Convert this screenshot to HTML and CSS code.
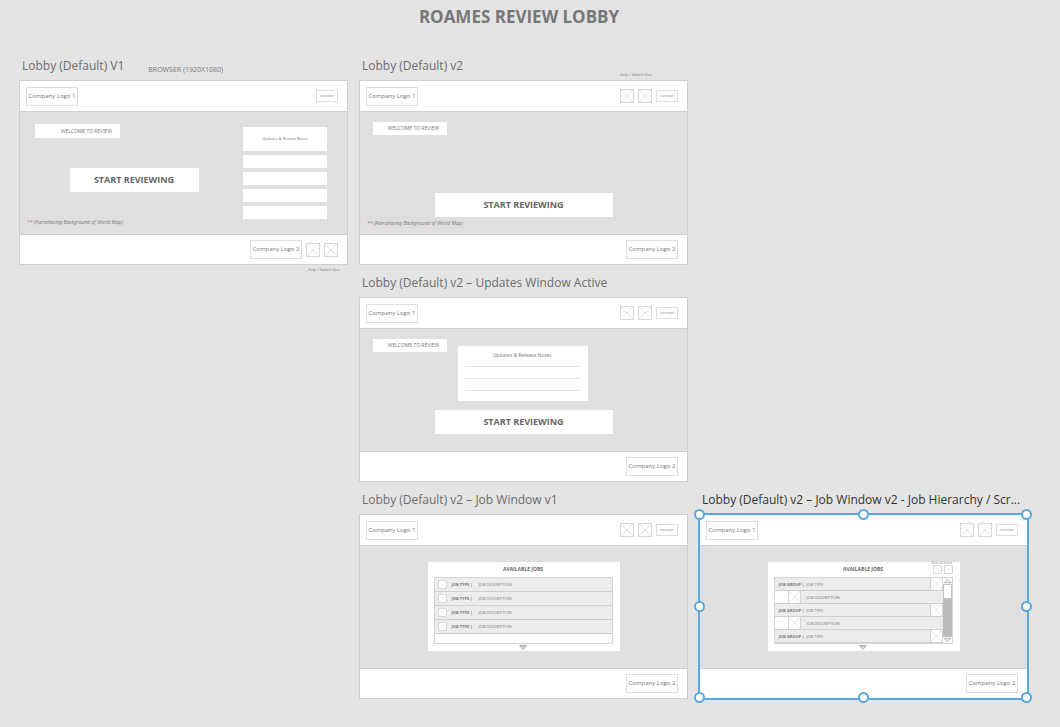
FILE: index.html
```
<!DOCTYPE html>
<html lang="en">
<head>
<meta charset="utf-8">
<meta name="viewport" content="width=device-width, initial-scale=1">
<title>Roames Review Lobby</title>
<link rel="stylesheet" href="styles.css">
</head>
<body>
<svg class="defs" aria-hidden="true">
  <symbol id="cross" viewBox="0 0 14 14" preserveAspectRatio="none"><path d="M0 0L14 14M14 0L0 14" fill="none" stroke="#d4d4d4" stroke-width="0.7"/></symbol>
  <symbol id="more" viewBox="0 0 8 5"><path d="M0.5 0.5H7.5L4 4.5Z" fill="#e4e4e4" stroke="#999" stroke-width="0.8"/><path d="M1.5 1.7H6.5" stroke="#aaa" stroke-width="0.6"/></symbol>
</svg>
<h1 class="title">ROAMES REVIEW LOBBY</h1>
<main class="canvas">

  <section class="artboard col-1">
    <div class="caption"><h2 class="name">Lobby (Default) V1</h2><span class="size">BROWSER (1920X1080)</span></div>
    <div class="board">
      <header class="bar"><span class="logo">Company Logo 1</span><span class="version">version</span></header>
      <div class="stage split">
        <div class="main">
          <p class="welcome wide">WELCOME TO REVIEW</p>
          <button class="start small" type="button">START REVIEWING</button>
          <p class="note">** (Parrallaxing Background of World Map)</p>
        </div>
        <div class="news"><p class="news-title">Updates &amp; Review Notes</p><i class="slot"></i><i class="slot"></i><i class="slot"></i><i class="slot"></i></div>
      </div>
      <footer class="bar foot"><span class="logo">Company Logo 2</span><svg class="box"><use href="#cross"/></svg><svg class="box"><use href="#cross"/></svg></footer>
    </div>
    <span class="hint below">Help / Switch User</span>
  </section>

  <section class="artboard col-2">
    <div class="caption"><h2 class="name">Lobby (Default) v2</h2><span class="hint">Help / Switch User</span></div>
    <div class="board">
      <header class="bar"><span class="logo">Company Logo 1</span><svg class="box"><use href="#cross"/></svg><svg class="box"><use href="#cross"/></svg><span class="version">version</span></header>
      <div class="stage">
        <p class="welcome">WELCOME TO REVIEW</p>
        <button class="start low" type="button">START REVIEWING</button>
        <p class="note">** (Parrallaxing Background of World Map)</p>
      </div>
      <footer class="bar foot"><span class="logo">Company Logo 2</span></footer>
    </div>
  </section>

  <section class="artboard col-2">
    <div class="caption"><h2 class="name">Lobby (Default) v2 – Updates Window Active</h2></div>
    <div class="board">
      <header class="bar"><span class="logo">Company Logo 1</span><svg class="box"><use href="#cross"/></svg><svg class="box"><use href="#cross"/></svg><span class="version">version</span></header>
      <div class="stage">
        <div class="top-row">
          <p class="welcome">WELCOME TO REVIEW</p>
          <div class="updates"><p class="updates-title">Updates &amp; Release Notes</p><hr class="line"><hr class="line"><hr class="line"></div>
        </div>
        <button class="start" type="button">START REVIEWING</button>
      </div>
      <footer class="bar foot"><span class="logo">Company Logo 2</span></footer>
    </div>
  </section>

  <section class="artboard col-2">
    <div class="caption"><h2 class="name">Lobby (Default) v2 – Job Window v1</h2></div>
    <div class="board">
      <header class="bar"><span class="logo">Company Logo 1</span><svg class="box"><use href="#cross"/></svg><svg class="box"><use href="#cross"/></svg><span class="version">version</span></header>
      <div class="stage">
        <div class="jobs">
          <div class="jobs-head"><h3 class="jobs-title">AVAILABLE JOBS</h3></div>
          <ul class="list">
            <li class="job"><svg class="tick"><use href="#cross"/></svg><b class="type">JOB TYPE |</b><span>JOB DESCRIPTION</span></li>
            <li class="job"><svg class="tick"><use href="#cross"/></svg><b class="type">JOB TYPE |</b><span>JOB DESCRIPTION</span></li>
            <li class="job"><svg class="tick"><use href="#cross"/></svg><b class="type">JOB TYPE |</b><span>JOB DESCRIPTION</span></li>
            <li class="job"><svg class="tick"><use href="#cross"/></svg><b class="type">JOB TYPE |</b><span>JOB DESCRIPTION</span></li>
          </ul>
          <svg class="more"><use href="#more"/></svg>
        </div>
      </div>
      <footer class="bar foot"><span class="logo">Company Logo 2</span></footer>
    </div>
  </section>

  <section class="artboard col-3 selected">
    <div class="caption"><h2 class="name">Lobby (Default) v2 – Job Window v2 - Job Hierarchy / Scr...</h2></div>
    <div class="board">
      <header class="bar"><span class="logo">Company Logo 1</span><svg class="box"><use href="#cross"/></svg><svg class="box"><use href="#cross"/></svg><span class="version">version</span></header>
      <div class="stage">
        <div class="jobs">
          <div class="jobs-head"><h3 class="jobs-title">AVAILABLE JOBS</h3>
            <div class="tools"><span class="tool">Clear all<svg class="tick"><use href="#cross"/></svg></span><span class="tool">Select<svg class="tick"><use href="#cross"/></svg></span></div>
          </div>
          <div class="scroller">
            <ul class="tree">
              <li class="group"><b>JOB GROUP |</b><span>JOB TYPE</span><svg class="cell"><use href="#cross"/></svg></li>
              <li class="child"><svg class="cell"><use href="#cross"/></svg><span>JOB DESCRIPTION</span></li>
              <li class="group"><b>JOB GROUP |</b><span>JOB TYPE</span><svg class="cell"><use href="#cross"/></svg></li>
              <li class="child"><svg class="cell"><use href="#cross"/></svg><span>JOB DESCRIPTION</span></li>
              <li class="group"><b>JOB GROUP |</b><span>JOB TYPE</span><svg class="cell"><use href="#cross"/></svg></li>
            </ul>
            <div class="scroll">
              <svg class="arrow" viewBox="0 0 8 5"><path d="M1 4L4 1L7 4Z" fill="#eee" stroke="#aaa" stroke-width="0.7"/></svg>
              <i class="thumb"></i><i class="track"></i>
              <svg class="arrow" viewBox="0 0 8 5"><path d="M1 1L4 4L7 1Z" fill="#eee" stroke="#aaa" stroke-width="0.7"/></svg>
            </div>
          </div>
          <svg class="more"><use href="#more"/></svg>
        </div>
      </div>
      <footer class="bar foot"><span class="logo">Company Logo 2</span></footer>
      <i class="handle nw"></i><i class="handle n"></i><i class="handle ne"></i><i class="handle w"></i><i class="handle e"></i><i class="handle sw"></i><i class="handle s"></i><i class="handle se"></i>
    </div>
  </section>
</main>
</body>
</html>
```
FILE: styles.css
```
* { box-sizing: border-box; }
body { margin: 0; background: #e4e4e4; color: #777; font-family: "Open Sans", "Noto Sans", sans-serif; }
h1, h2, h3, p, ul { margin: 0; padding: 0; }
ul { list-style: none; }
i { display: block; }
.defs { position: absolute; width: 0; height: 0; }

.title { padding-top: 5px; padding-right: 22px; height: 56px; text-align: center; font-size: 17px; line-height: 24px; font-weight: 700; color: #777; }
.canvas { display: grid; grid-template-columns: repeat(3, minmax(0, 1fr)); gap: 7px 11px; padding: 0 32px 24px 19px; }
.artboard { height: 210px; }
.col-1 { grid-column: 1; }
.col-2 { grid-column: 2; }
.col-3 { grid-column: 3; }

.caption { display: flex; height: 24px; padding-left: 3px; }
.name { font-size: 12px; line-height: 20px; font-weight: 400; color: #6c6c6c; white-space: nowrap; }
.size { margin: 7px 0 0 24px; font-size: 7px; line-height: 14px; }
.hint { margin-left: auto; padding: 16px 36px 0 0; font-size: 4px; line-height: 6px; font-style: italic; color: #777; }
.below { display: block; padding: 2px 8px 0 0; text-align: right; }

.board { position: relative; border: 1px solid #cfcfcf; background: #fff; }
.bar { display: flex; align-items: center; gap: 4px; height: 31px; padding: 0 9px 0 6px; border-bottom: 1px solid #d0cfd0; }
.foot { justify-content: flex-end; height: 30px; border-bottom: 0; border-top: 1px solid #d0cfd0; }
.logo { width: 52px; border: 1px solid #dedede; font-size: 6px; line-height: 17px; text-align: center; white-space: nowrap; }
header .logo { margin-right: auto; }
.version { width: 22px; border: 1px solid #dedede; font-size: 4px; line-height: 10px; text-align: center; }
.box { width: 14px; height: 14px; border: 1px solid #d8d8d8; }

.stage { display: flex; flex-direction: column; min-height: 122px; padding: 10px 7px 6px; background: #e0dedf; }
.welcome { align-self: flex-start; width: 74px; margin-left: 6px; padding-right: 8px; background: #fff; font-size: 5px; line-height: 13px; text-align: right; white-space: nowrap; }
.wide { width: 85px; margin: 2px 0 0 8px; line-height: 14px; }
.start { align-self: center; width: 178px; height: 24px; padding: 0; border: 0; background: #fff; color: #666; font-family: inherit; font-size: 9px; font-weight: 700; line-height: 24px; }
.small { width: 129px; margin: 30px 2px 26px 0; }
.low { margin: 58px 0 2px; }
.note { font-size: 5px; line-height: 9px; font-style: italic; }
.split { flex-direction: row; }
.main { flex: 1; display: flex; flex-direction: column; }
.news { display: flex; flex-direction: column; gap: 4px; width: 84px; margin: 5px 13px 0 0; }
.news-title { background: #fff; font-size: 4px; line-height: 24px; text-align: center; }
.slot { height: 13px; background: #fff; }

.top-row { display: flex; height: 71px; }
.updates { width: 130px; height: 55px; margin: 7px 0 0 11px; padding: 5px 9px 0 7px; background: #fff; }
.updates-title { margin-bottom: 6px; font-size: 5px; line-height: 9px; text-align: center; }
.line { margin: 0 0 11px; border: 0; border-top: 1px solid #e2e2e2; }

.jobs { display: flex; flex-direction: column; align-self: center; width: 192px; height: 89px; margin-top: 6px; padding: 0 7px 0 6px; background: #fff; font-size: 4px; }
.jobs-head { position: relative; height: 15px; }
.jobs-title { font-size: 5px; line-height: 15px; text-align: center; color: #666; }
.list { height: 67px; border: 1px solid #d4d4d4; }
.job { display: flex; align-items: center; height: 14px; padding-left: 3px; background: #edecec; border-bottom: 1px solid #cfcfcf; }
.tick { width: 9px; height: 9px; border: 1px solid #d8d8d8; border-radius: 1px; background: #fff; }
.type { width: 27px; margin-left: 5px; }
.more { align-self: center; width: 8px; height: 5px; margin-top: 1px; }

.tools { position: absolute; right: 0; top: 0; display: flex; gap: 2px; }
.tool { display: flex; flex-direction: column; align-items: center; width: 9px; font-size: 3px; line-height: 3px; white-space: nowrap; }
.scroller { display: flex; height: 67px; border: 1px solid #d4d4d4; }
.tree { flex: 1; }
.group, .child { display: flex; align-items: center; height: 13px; background: #edecec; border-bottom: 1px solid #cfcfcf; }
.group { gap: 2px; padding-left: 4px; }
.child { gap: 6px; background: linear-gradient(to right, #fff 13px, #edecec 13px); padding-left: 13px; }
.cell { width: 13px; height: 12px; border: 0 solid #d4d4d4; border-width: 0 1px; background: #fff; }
.group .cell { margin-left: auto; }
.scroll { display: flex; flex-direction: column; width: 9px; background: #fff; }
.arrow { width: 9px; height: 6px; }
.thumb { height: 15px; border: 1px solid #c4c4c4; background: #fff; }
.track { flex: 1; background: #bdbcbd; }

.selected .name { color: #333; }
.selected .board { outline: 2px solid #58a9dd; outline-offset: -1px; }
.handle { position: absolute; width: 11px; height: 11px; margin: -6px 0 0 -6px; border: 2px solid #58a9dd; border-radius: 50%; background: #fff; }
.nw, .n, .ne { top: 0; }
.w, .e { top: 50%; }
.sw, .s, .se { top: 100%; }
.nw, .w, .sw { left: 0; }
.n, .s { left: 50%; }
.ne, .e, .se { left: 100%; }
```
